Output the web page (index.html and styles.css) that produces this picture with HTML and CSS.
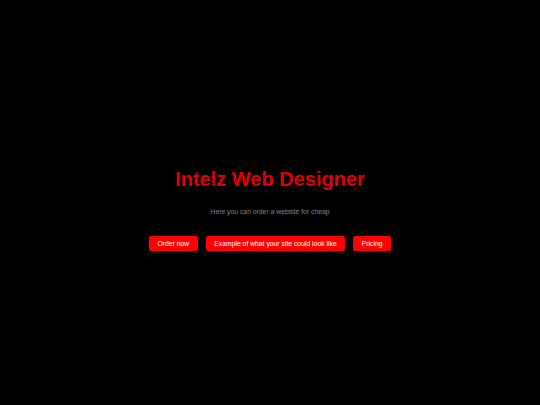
FILE: index.html
```html
<!DOCTYPE html>
<html lang="en">
<head>
  <meta charset="UTF-8">
  <meta name="viewport" content="width=device-width, initial-scale=1.0">
  <title>Intelz Web Designer</title>
  <link rel="stylesheet" href="styles.css">
</head>
<body>
    <div class="hero">
        <h1 class="hero-title">Intelz Web Designer</h1>
        <p class="hero-text">Here you can order a website for cheap</p>
        <div class="hero-buttons">
            <a class="btn" href="#order">Order now</a>
            <a class="btn" href="#example">Example of what your site could look like</a>
            <a class="btn" href="#pricing">Pricing</a>
        </div>
    </div>
</body>
</html>
```

FILE: styles.css
```css
body {
  margin: 0;
  height: 100vh;
  background-color: #000;
  font-family: "Liberation Sans", Arial, sans-serif;
  display: flex;
  align-items: center;
  justify-content: center;
}

.hero {
  display: flex;
  flex-direction: column;
  align-items: center;
  margin-top: 14px;
}

.hero-title {
  margin: 0;
  font-size: 20px;
  font-weight: bold;
  color: #e00000;
}

.hero-text {
  margin: 17px 0 0;
  font-size: 6.8px;
  color: #808080;
}

.hero-buttons {
  display: flex;
  gap: 8px;
  margin-top: 21px;
}

.btn {
  display: block;
  padding: 4px 8.5px;
  font-size: 6.8px;
  line-height: 7px;
  color: #fff;
  background-color: #f00;
  border-radius: 2px;
  text-decoration: none;
}
```
